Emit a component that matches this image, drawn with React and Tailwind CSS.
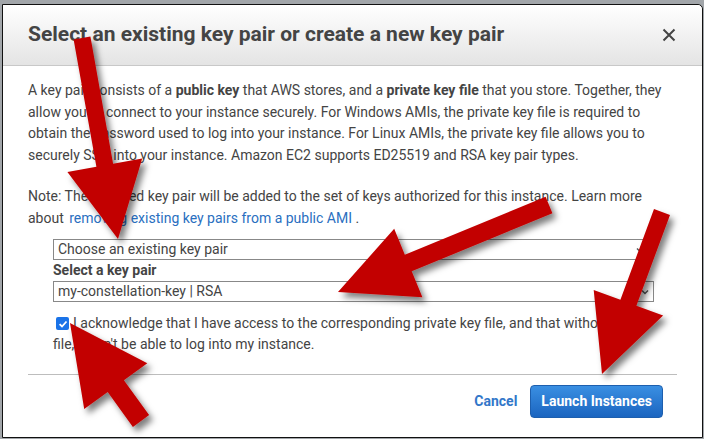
import React from "react";

const arrows = [
  { tail: [82, 38], tip: [118, 239], sw: 17, hw: 76, hl: 75 },
  { tail: [549, 205], tip: [338, 292], sw: 18, hw: 74, hl: 76 },
  { tail: [662, 212], tip: [602, 374], sw: 17, hw: 74, hl: 76 },
  { tail: [141, 421], tip: [70, 323], sw: 20, hw: 78, hl: 78 },
];

function arrowPoints({ tail, tip, sw, hw, hl }) {
  const [x1, y1] = tail;
  const [x2, y2] = tip;
  const dx = x2 - x1;
  const dy = y2 - y1;
  const len = Math.hypot(dx, dy);
  const ux = dx / len;
  const uy = dy / len;
  const px = -uy;
  const py = ux;
  const bx = x2 - ux * hl;
  const by = y2 - uy * hl;
  const pts = [
    [x1 + (px * sw) / 2, y1 + (py * sw) / 2],
    [bx + (px * sw) / 2, by + (py * sw) / 2],
    [bx + (px * hw) / 2, by + (py * hw) / 2],
    [x2, y2],
    [bx - (px * hw) / 2, by - (py * hw) / 2],
    [bx - (px * sw) / 2, by - (py * sw) / 2],
    [x1 - (px * sw) / 2, y1 - (py * sw) / 2],
  ];
  return pts.map((p) => p[0].toFixed(1) + "," + p[1].toFixed(1)).join(" ");
}

function Caret() {
  return (
    <svg width="8" height="6" viewBox="0 0 8 6" className="text-[#555]">
      <path d="M1 1.5 L4 4.5 L7 1.5" fill="none" stroke="currentColor" strokeWidth="1.4" />
    </svg>
  );
}

export default function App() {
  return (
    <div
      className="relative w-[704px] h-[439px] overflow-hidden bg-[#a2a6aa] pt-[4px] pl-[2px] pr-[1px] pb-[1px]"
      style={{ fontFamily: "Roboto, 'Liberation Sans', sans-serif" }}
    >
      <div className="h-full flex flex-col bg-white border border-[#111] rounded-tr-[5px] text-[#444]">
        {/* header */}
        <div className="h-[61px] shrink-0 flex items-center justify-between pl-[25px] pr-[26px] bg-gradient-to-b from-white to-[#e4e4e4] border-b border-[#c8c8c8] rounded-tr-[5px]">
          <h1 className="text-[21px] font-bold text-[#444]">
            Select an existing key pair or create a new key pair
          </h1>
          <svg width="14" height="14" viewBox="0 0 14 14">
            <path d="M1.5 1.5 L12.5 12.5 M12.5 1.5 L1.5 12.5" stroke="#444" strokeWidth="2" />
          </svg>
        </div>

        {/* body */}
        <div className="flex-1 flex flex-col px-[25px] pt-[14px] text-[14px] leading-[21.7px] whitespace-nowrap">
          <p>
            A key pair consists of a <b>public key</b> that AWS stores, and a <b>private key file</b> that you store. Together, they
            <br />
            allow you to connect to your instance securely. For Windows AMIs, the private key file is required to
            <br />
            obtain the password used to log into your instance. For Linux AMIs, the private key file allows you to
            <br />
            securely SSH into your instance. Amazon EC2 supports ED25519 and RSA key pair types.
          </p>
          <p className="mt-[19px]">
            Note: The selected key pair will be added to the set of keys authorized for this instance. Learn more
            <br />
            about <span className="ml-[2px] text-[#2a6fbf]">removing existing key pairs from a public AMI</span> .
          </p>

          <div className="ml-[25px] mt-[10px] flex flex-col">
            <div className="w-[596px] h-[21px] border border-[#888] flex items-center justify-between pl-[4px] pr-[4px]">
              <span>Choose an existing key pair</span>
              <Caret />
            </div>
            <div className="font-bold leading-[21px]">Select a key pair</div>
            <div className="w-[601px] h-[21px] border border-[#888] flex items-center justify-between pl-[4px] pr-[4px]">
              <span>my-constellation-key | RSA</span>
              <Caret />
            </div>
            <div className="mt-[11px] leading-[21px]">
              <div className="flex items-center">
                <span className="ml-[3px] mr-[4px] w-[13px] h-[13px] rounded-[2px] bg-[#1a73e8] flex items-center justify-center">
                  <svg width="10" height="10" viewBox="0 0 10 10">
                    <path d="M1.6 5.2 L4 7.5 L8.5 2.5" fill="none" stroke="white" strokeWidth="1.8" />
                  </svg>
                </span>
                <span>I acknowledge that I have access to the corresponding private key file, and that without this</span>
              </div>
              <div>file, I won't be able to log into my instance.</div>
            </div>
          </div>

          <div className="mt-[19px] border-t border-[#bdbdbd]" />

          <div className="mt-[10px] flex items-center justify-end gap-[13px] pr-[14px]">
            <span className="font-bold text-[#3277c9]">Cancel</span>
            <button className="h-[33px] px-[10px] rounded-[4px] border border-[#1d5fae] bg-gradient-to-b from-[#3a8fe2] to-[#1b65c0] text-white font-bold">
              Launch Instances
            </button>
          </div>
        </div>
      </div>

      <svg className="absolute inset-0 pointer-events-none" width="704" height="439">
        <defs>
          <filter id="sh" x="-30%" y="-30%" width="160%" height="160%">
            <feDropShadow dx="4" dy="5" stdDeviation="3" floodColor="#000" floodOpacity="0.5" />
          </filter>
        </defs>
        {arrows.map((a, i) => (
          <polygon key={i} points={arrowPoints(a)} fill="#c20000" filter="url(#sh)" />
        ))}
      </svg>
    </div>
  );
}
